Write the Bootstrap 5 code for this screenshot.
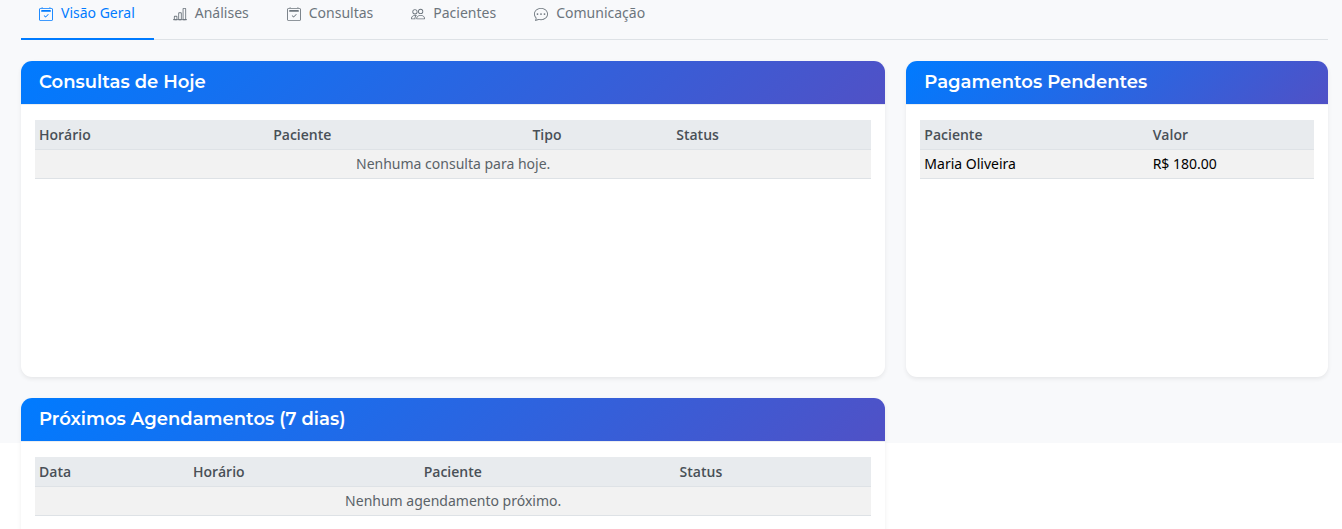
<!DOCTYPE html>
<html lang="pt-BR">
<head>
<meta charset="utf-8">
<meta name="viewport" content="width=device-width, initial-scale=1">
<title>Painel</title>
<link href="https://cdn.jsdelivr.net/npm/bootstrap@5.3.0/dist/css/bootstrap.min.css" rel="stylesheet">
<style>
  body { font-family: "Noto Sans", "Open Sans", sans-serif; font-size: 14px; line-height: 21px; background: #fff; height: 100vh; overflow: hidden; }
  .dashboard { padding: 0 14px 21px 21px; background: linear-gradient(#f8f9fb, #f8f9fb) top / 100% 443px no-repeat; }
  .dash-tabs { --bs-nav-tabs-border-color: #dee2e6; margin-bottom: 21px; }
  .dash-tabs .nav-link { display: flex; align-items: center; gap: 8px; margin: 0; padding: 2px 19px 15px 18px; border: 0; border-bottom: 2px solid transparent; border-radius: 0; color: #6c757d; }
  .dash-tabs .nav-item { margin-bottom: -1px; }
  .dash-tabs .nav-link.active { color: #007bff; background: none; border-bottom-color: #007bff; }
  .dash-tabs svg { width: 14px; height: 14px; fill: currentColor; margin-top: 2px; }
  .dash-tabs .nav-item + .nav-item .nav-link { padding-left: 19px; }
  .dash-row { --bs-gutter-x: 21px; row-gap: 21px; }
  .panel { border: 0; border-radius: 11px; overflow: hidden; box-shadow: 0 2px 4px rgba(0,0,0,.075); }
  .panel-tall { min-height: 316px; }
  .panel .card-header { padding: 11px 18px; background: linear-gradient(135deg, #007bff, #5051c6) padding-box; color: #fff; border-bottom: 1px solid #eceef0; border-radius: 0; }
  .panel h2 { font: 600 18px/21px Montserrat, Inter, sans-serif; margin: 0; }
  .panel .card-body { padding: 15px 14px; }
  .panel .table { table-layout: fixed; margin: 0; border-color: #dee2e6; }
  .panel th, .panel td { padding: 4px; }
  .panel th { font-family: "Open Sans", "Noto Sans", sans-serif; font-weight: 600; color: #495057; background: #e8ebee; }
  .panel td { line-height: 20px; color: #000; background: #f2f2f2; }
  .panel td.empty-note { color: #5a6268; text-align: center; }
</style>
</head>
<body>
<svg class="d-none" aria-hidden="true">
  <symbol id="i-cal" viewBox="0 0 16 16"><path d="M10.854 8.146a.5.5 0 0 1 0 .708l-3 3a.5.5 0 0 1-.708 0l-1.5-1.5a.5.5 0 1 1 .708-.708L7.5 10.793l2.646-2.647a.5.5 0 0 1 .708 0z"/><path d="M3.500 0a.5.5 0 0 1 .5.5V1h8V.5a.5.5 0 0 1 1 0V1h1a2 2 0 0 1 2 2v11a2 2 0 0 1-2 2H2a2 2 0 0 1-2-2V3a2 2 0 0 1 2-2h1V.5a.5.5 0 0 1 .5-.5zM2 2a1 1 0 0 0-1 1v11a1 1 0 0 0 1 1h12a1 1 0 0 0 1-1V3a1 1 0 0 0-1-1H2z"/><path d="M2.500 4a.5.5 0 0 1 .5-.5h10a.5.5 0 0 1 .5.5v1a.5.5 0 0 1-.5.5H3a.5.5 0 0 1-.5-.5V4z"/></symbol>
  <symbol id="i-chart" viewBox="0 0 16 16"><path d="M4 11H2v3h2v-3zm5-4H7v7h2V7zm5-5v12h-2V2h2zm-2-1a1 1 0 0 0-1 1v12a1 1 0 0 0 1 1h2a1 1 0 0 0 1-1V2a1 1 0 0 0-1-1h-2zM6 7a1 1 0 0 1 1-1h2a1 1 0 0 1 1 1v7a1 1 0 0 1-1 1H7a1 1 0 0 1-1-1V7zm-5 4a1 1 0 0 1 1-1h2a1 1 0 0 1 1 1v3a1 1 0 0 1-1 1H2a1 1 0 0 1-1-1v-3z"/><path d="M0 14h16v1H0z"/></symbol>
  <symbol id="i-people" viewBox="0 0 16 16"><path d="M15 14s1 0 1-1-1-4-5-4-5 3-5 4 1 1 1 1h8zm-7.978-1A.261.261 0 0 1 7 12.996c.001-.264.167-1.030.760-1.720C8.312 10.629 9.282 10 11 10c1.717 0 2.687.63 3.240 1.276.593.690.758 1.457.760 1.720l-.008.002a.274.274 0 0 1-.014.002H7.022zM11 7a2 2 0 1 0 0-4 2 2 0 0 0 0 4zm3-2a3 3 0 1 1-6 0 3 3 0 0 1 6 0zM6.936 9.280a5.880 5.880 0 0 0-1.230-.247A7.350 7.350 0 0 0 5 9c-4 0-5 3-5 4 0 .667.333 1 1 1h4.216A2.238 2.238 0 0 1 5 13c0-1.010.377-2.042 1.090-2.904.243-.294.526-.569.846-.816zM4.920 10A5.493 5.493 0 0 0 4 13H1c0-.260.164-1.030.760-1.724.545-.636 1.492-1.256 3.160-1.275zM1.500 5.500a3 3 0 1 1 6 0 3 3 0 0 1-6 0zm3-2a2 2 0 1 0 0 4 2 2 0 0 0 0-4z"/></symbol>
  <symbol id="i-chat" viewBox="0 0 16 16"><path d="M5 8a1 1 0 1 1-2 0 1 1 0 0 1 2 0zm4 0a1 1 0 1 1-2 0 1 1 0 0 1 2 0zm3 1a1 1 0 1 0 0-2 1 1 0 0 0 0 2z"/><path d="m2.165 15.803.02-.004c1.830-.363 2.948-.842 3.468-1.105A9.060 9.060 0 0 0 8 15c4.418 0 8-3.134 8-7s-3.582-7-8-7-8 3.134-8 7c0 1.760.743 3.370 1.970 4.600a10.437 10.437 0 0 1-.524 2.318l-.003.011a10.722 10.722 0 0 1-.244.637c-.079.186.074.394.273.362a21.673 21.673 0 0 0 .693-.125zm.8-3.108a1 1 0 0 0-.287-.801C1.618 10.830 1 9.468 1 8c0-3.192 3.004-6 7-6s7 2.808 7 6c0 3.193-3.004 6-7 6a8.060 8.060 0 0 1-2.088-.272 1 1 0 0 0-.711.074c-.387.196-1.240.570-2.634.893a10.970 10.970 0 0 0 .398-2z"/></symbol>
</svg>
<main class="dashboard">
  <ul class="nav nav-tabs dash-tabs">
    <li class="nav-item"><a class="nav-link active" aria-current="page" href="#"><svg><use href="#i-cal"/></svg>Visão Geral</a></li>
    <li class="nav-item"><a class="nav-link" href="#"><svg><use href="#i-chart"/></svg>Análises</a></li>
    <li class="nav-item"><a class="nav-link" href="#"><svg><use href="#i-cal"/></svg>Consultas</a></li>
    <li class="nav-item"><a class="nav-link" href="#"><svg><use href="#i-people"/></svg>Pacientes</a></li>
    <li class="nav-item"><a class="nav-link" href="#"><svg><use href="#i-chat"/></svg>Comunicação</a></li>
  </ul>
  <div class="row dash-row">
    <div class="col-8">
      <section class="card panel panel-tall">
        <div class="card-header"><h2>Consultas de Hoje</h2></div>
        <div class="card-body">
          <table class="table">
            <colgroup><col style="width:28%"><col style="width:31%"><col style="width:17.2%"><col></colgroup>
            <thead><tr><th scope="col">Horário</th><th scope="col">Paciente</th><th scope="col">Tipo</th><th scope="col">Status</th></tr></thead>
            <tbody><tr><td colspan="4" class="empty-note">Nenhuma consulta para hoje.</td></tr></tbody>
          </table>
        </div>
      </section>
    </div>
    <div class="col-4">
      <section class="card panel panel-tall">
        <div class="card-header"><h2>Pagamentos Pendentes</h2></div>
        <div class="card-body">
          <table class="table">
            <colgroup><col style="width:58%"><col></colgroup>
            <thead><tr><th scope="col">Paciente</th><th scope="col">Valor</th></tr></thead>
            <tbody><tr><td>Maria Oliveira</td><td>R$ 180.00</td></tr></tbody>
          </table>
        </div>
      </section>
    </div>
    <div class="col-8">
      <section class="card panel panel-tall">
        <div class="card-header"><h2>Próximos Agendamentos (7 dias)</h2></div>
        <div class="card-body">
          <table class="table">
            <colgroup><col style="width:18.4%"><col style="width:27.6%"><col style="width:30.6%"><col></colgroup>
            <thead><tr><th scope="col">Data</th><th scope="col">Horário</th><th scope="col">Paciente</th><th scope="col">Status</th></tr></thead>
            <tbody><tr><td colspan="4" class="empty-note">Nenhum agendamento próximo.</td></tr></tbody>
          </table>
        </div>
      </section>
    </div>
  </div>
</main>
<script src="https://cdn.jsdelivr.net/npm/bootstrap@5.3.0/dist/js/bootstrap.bundle.min.js"></script>
</body>
</html>
